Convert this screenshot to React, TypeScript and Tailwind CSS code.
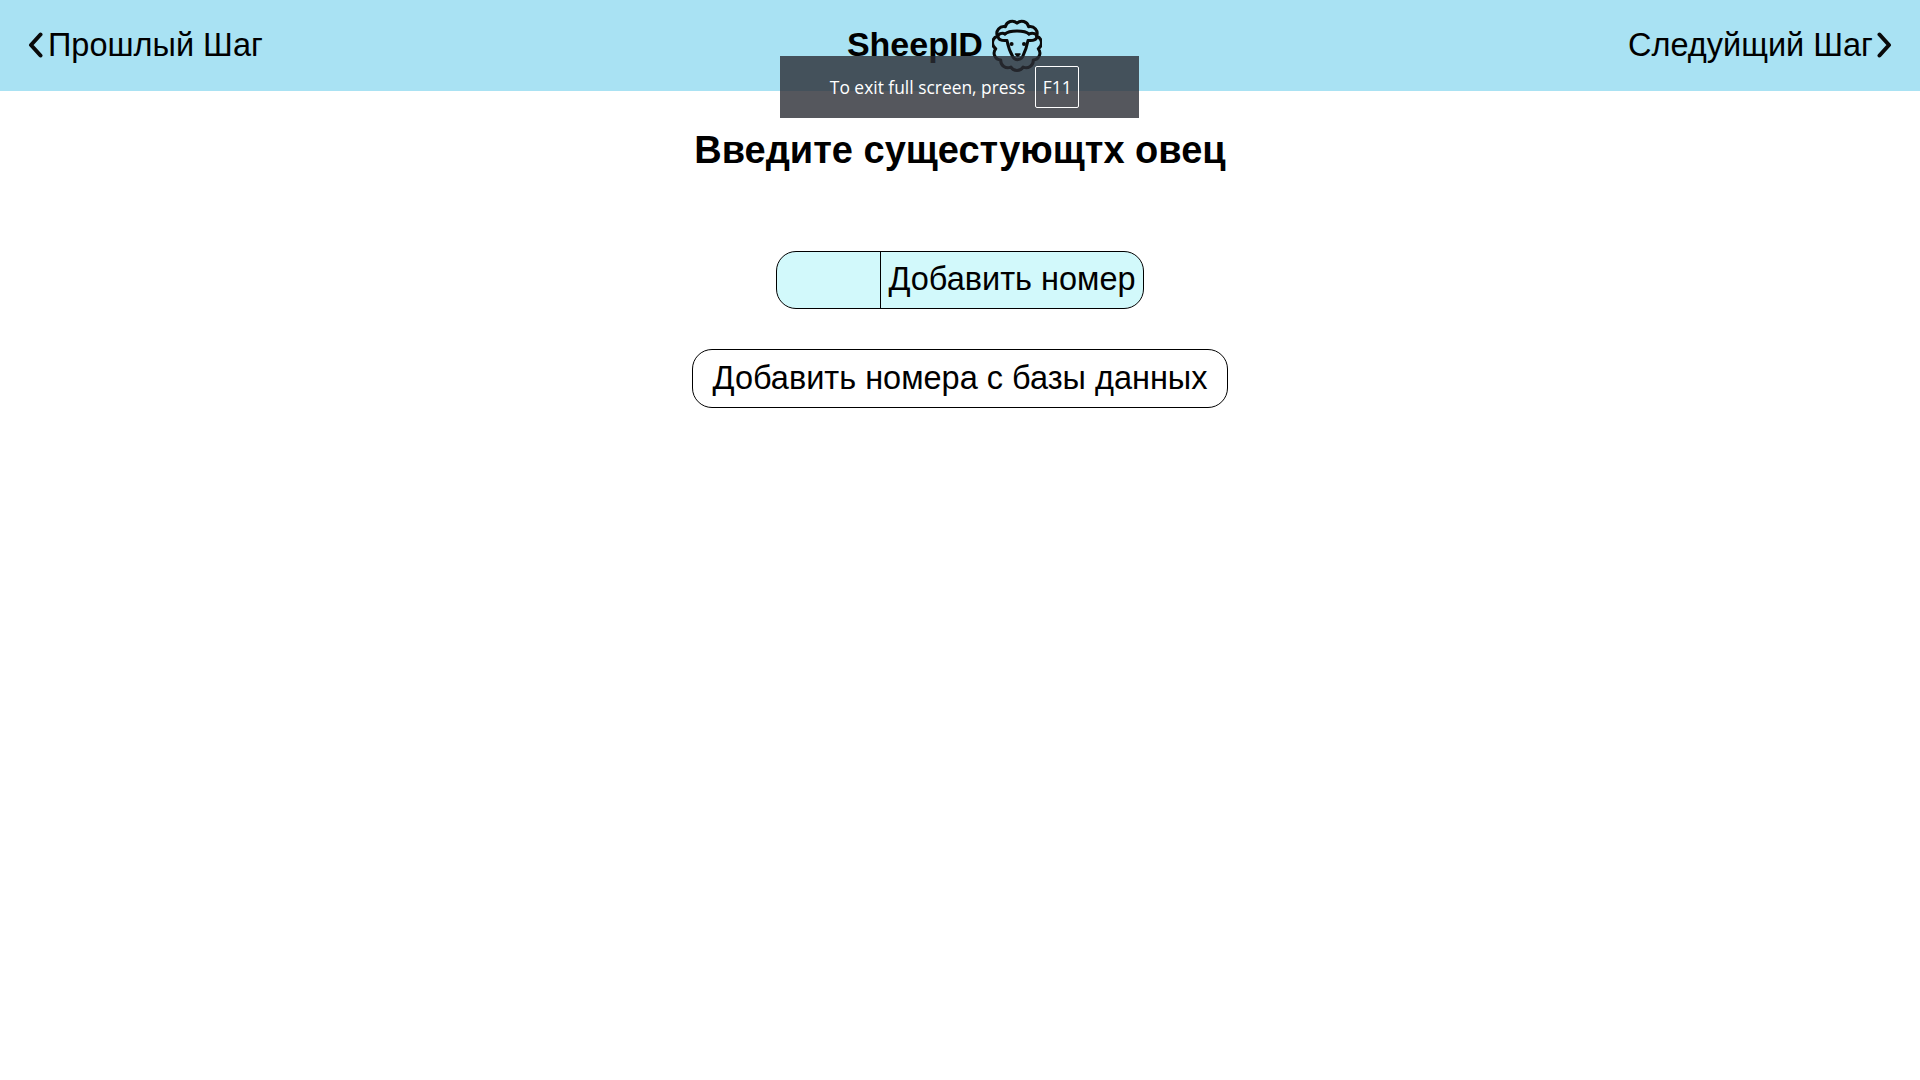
const woolPath = (() => {
  const n = 11;
  const r = 21.5;
  const pts = Array.from({ length: n }, (_, i) => {
    const a = (i / n) * Math.PI * 2 - Math.PI / 2;
    return [25 + r * Math.cos(a), 26.5 + r * 1.04 * Math.sin(a)];
  });
  let d = `M${pts[0][0].toFixed(1)} ${pts[0][1].toFixed(1)}`;
  for (let i = 1; i <= n; i++) {
    const p = pts[i % n];
    d += ` A7 7 0 0 1 ${p[0].toFixed(1)} ${p[1].toFixed(1)}`;
  }
  return d + 'Z';
})();

function SheepIcon() {
  return (
    <svg width="50" height="54" viewBox="0 0 50 54" fill="none" stroke="#0a0a0a" strokeWidth="3" strokeLinecap="round" strokeLinejoin="round">
      <path d={woolPath} />
      <path d="M13 15 C17 11 33 11 37 15" />
      <path d="M13 15 C10 13 6 15 6 18 C7 21 10 22 15 21.5 C16 27 18 33 21 38 C23 41.5 28 41.5 30.5 38 C33 33 35 27 36 21.5 C41 22 44 21 45 18 C45 15 41 13 37 15" />
      <circle cx="19.6" cy="25" r="2" fill="#0a0a0a" stroke="none" />
      <circle cx="32" cy="25" r="2" fill="#0a0a0a" stroke="none" />
      <path d="M23.5 35 L28 35 L25.7 37.5Z" fill="#0a0a0a" strokeWidth="1.5" />
    </svg>
  );
}

function Chevron({ right }: { right?: boolean }) {
  return (
    <svg width="16" height="26" viewBox="0 0 16 26" fill="none" stroke="#0a0a0a" strokeWidth="4" strokeLinecap="round" strokeLinejoin="round">
      <path d={right ? 'M3.5 2.5 L13 13 L3.5 23.5' : 'M12.5 2.5 L3 13 L12.5 23.5'} />
    </svg>
  );
}

export default function App() {
  return (
    <div className="relative min-h-screen bg-white text-black font-['Liberation_Sans',Arial,sans-serif]">
      {/* Header */}
      <header className="flex h-[91px] items-center justify-between bg-[#a9e2f3] px-[28px] pb-[1px] text-[32.5px]">
        <a className="flex items-center gap-[4px]">
          <Chevron />
          <span>Прошлый Шаг</span>
        </a>
        <div className="-ml-[2px] flex items-center gap-[9px] pb-[1px] pt-[3px]">
          <span className="mb-[4px] text-[34px] font-bold leading-[38px]">SheepID</span>
          <SheepIcon />
        </div>
        <a className="flex items-center gap-[3px]">
          <span>Следуйщий Шаг</span>
          <Chevron right />
        </a>
      </header>

      {/* Form */}
      <main className="flex flex-col items-center">
        <h1 className="mt-[36px] text-[38px] font-bold leading-[46px]">Введите сущестующтх овец</h1>
        <div className="mt-[78px] flex h-[58px] w-[368px] overflow-hidden rounded-[20px] border border-black bg-[#d2f9fb]">
          <input className="w-[104px] border-r border-black bg-transparent outline-none" />
          <button className="flex-1 pb-[2px] text-center text-[32.5px] leading-none">Добавить номер</button>
        </div>
        <button className="mt-[40px] flex h-[59px] w-[536px] items-center justify-center rounded-[20px] border border-black bg-white text-[32.5px]">
          Добавить номера с базы данных
        </button>
      </main>

      {/* Browser fullscreen hint */}
      <div className="absolute left-[780px] top-[56px] flex h-[62px] w-[359px] items-center justify-center gap-[10px] bg-[rgba(43,45,52,0.8)] pr-[10px] font-['Open_Sans',sans-serif] text-[17.4px] text-white">
        <span>To exit full screen, press</span>
        <kbd className="flex h-[42px] w-[44px] items-center justify-center rounded-[2px] border border-white font-['Open_Sans',sans-serif]">F11</kbd>
      </div>
    </div>
  );
}
